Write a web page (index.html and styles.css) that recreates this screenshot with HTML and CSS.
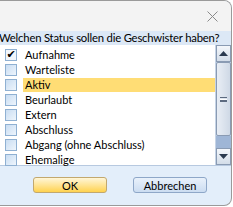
FILE: index.html
```html
<!DOCTYPE html>
<html lang="de">

<head>
  <meta charset="UTF-8">
  <title>Geschwister Status</title>
  <link rel="stylesheet" href="styles.css">
</head>

<body>
  <div class="dialog">
    <div class="titlebar">
      <span class="close">
        <svg width="11" height="11" viewBox="0 0 11 11"><path d="M0.5 0.5L10.5 10.5M10.5 0.5L0.5 10.5" stroke="#8a8a8a" stroke-width="1" fill="none"/></svg>
      </span>
    </div>
    <div class="question">Welchen Status sollen die Geschwister haben?</div>
    <div class="list">
      <div class="items">
        <div class="row"><span class="check checked">&#10004;</span><span class="text">Aufnahme</span></div>
        <div class="row"><span class="check"></span><span class="text">Warteliste</span></div>
        <div class="row"><span class="check"></span><span class="text active">Aktiv</span></div>
        <div class="row"><span class="check"></span><span class="text">Beurlaubt</span></div>
        <div class="row"><span class="check"></span><span class="text">Extern</span></div>
        <div class="row"><span class="check"></span><span class="text">Abschluss</span></div>
        <div class="row"><span class="check"></span><span class="text">Abgang (ohne Abschluss)</span></div>
        <div class="row"><span class="check"></span><span class="text">Ehemalige</span></div>
      </div>
      <div class="scrollbar">
        <div class="arrow">
          <svg width="9" height="5" viewBox="0 0 9 5"><path d="M0 5L4.5 0L9 5Z" fill="#2b3a4f"/></svg>
        </div>
        <div class="thumb"><span class="grip"></span></div>
        <div class="track"></div>
        <div class="arrow">
          <svg width="9" height="5" viewBox="0 0 9 5"><path d="M0 0L4.5 5L9 0Z" fill="#2b3a4f"/></svg>
        </div>
      </div>
    </div>
    <div class="footer">
      <button type="button" class="button ok">OK</button>
      <button type="button" class="button cancel">Abbrechen</button>
    </div>
  </div>
</body>

</html>
```

FILE: styles.css
```css
* {
  padding: 0;
  margin: 0;
  box-sizing: border-box;
}

body {
  background-color: #ffffff;
  font-family: Lato, "Liberation Sans", sans-serif;
  font-size: 11px;
  color: #000;
}

.dialog {
  width: 232px;
  height: 206px;
  border-top: 1px solid #9a9a9a;
  border-right: 1px solid #9a9a9a;
  border-bottom: 1px solid #9a9a9a;
  border-radius: 0 8px 8px 0;
  overflow: hidden;
  display: flex;
  flex-direction: column;
  background-color: #e3eefa;
}

.titlebar {
  height: 30px;
  background-color: #f3f3f3;
  display: flex;
  justify-content: flex-end;
  align-items: center;
  padding-right: 13px;
}

.close {
  display: flex;
}

.question {
  height: 14px;
  line-height: 14px;
  font-size: 11.3px;
  background-color: #dce8f6;
  white-space: nowrap;
  margin-left: -1px;
  letter-spacing: -0.2px;
}

.list {
  height: 121px;
  background-color: #fff;
  display: flex;
  border-bottom: 1px solid #b7c9e0;
}

.items {
  flex: 1;
  padding-top: 2px;
}

.row {
  height: 15px;
  display: flex;
  align-items: center;
}

.check {
  width: 12px;
  height: 12px;
  margin: 0 6px 0 5px;
  border: 1px solid #8fb0d2;
  background: linear-gradient(135deg, #c9ddf2, #eef5fc);
  font-family: "DejaVu Sans", sans-serif;
  font-size: 11px;
  font-weight: bold;
  line-height: 10px;
  text-align: center;
  color: #000;
}

.checked {
  background: #f2f6fb;
}

.text {
  flex: 1;
  height: 14px;
  line-height: 14px;
  padding-left: 2px;
  white-space: nowrap;
  overflow: hidden;
}

.active {
  background-color: #ffdd75;
}

.scrollbar {
  width: 16px;
  display: flex;
  flex-direction: column;
  background-color: #bccde3;
  border-left: 1px solid #c6d4e6;
}

.arrow {
  height: 17px;
  display: flex;
  justify-content: center;
  align-items: center;
  border: 1px solid #8a9bb3;
  background: linear-gradient(#f4f7fb, #d3dde9);
}

.thumb {
  height: 74px;
  border: 1px solid #8a9bb3;
  border-radius: 2px;
  background: linear-gradient(90deg, #e9eef5, #cfd9e6);
  display: flex;
  justify-content: center;
  align-items: center;
}

.grip {
  width: 7px;
  height: 5px;
  border-top: 1px solid #5d6b80;
  border-bottom: 1px solid #5d6b80;
  background: linear-gradient(#fff 0, #fff 1px, #5d6b80 1px, #5d6b80 2px, transparent 2px);
  background-position: 0 1px;
  background-repeat: no-repeat;
}

.track {
  flex: 1;
  background-color: #9fb6d6;
}

.footer {
  flex: 1;
  display: flex;
  gap: 26px;
  padding: 11px 0 0 33px;
}

.button {
  width: 74px;
  height: 16px;
  border-radius: 3px;
  font-family: Lato, "Liberation Sans", sans-serif;
  font-size: 11px;
  color: #000;
}

.ok {
  border: 1px solid #c2a86e;
  background: linear-gradient(#fff6d8, #ffe38f 55%, #ffd24f);
}

.cancel {
  border: 1px solid #8ea7c8;
  background: linear-gradient(#e9f1fb, #cbdcf1);
}
```
